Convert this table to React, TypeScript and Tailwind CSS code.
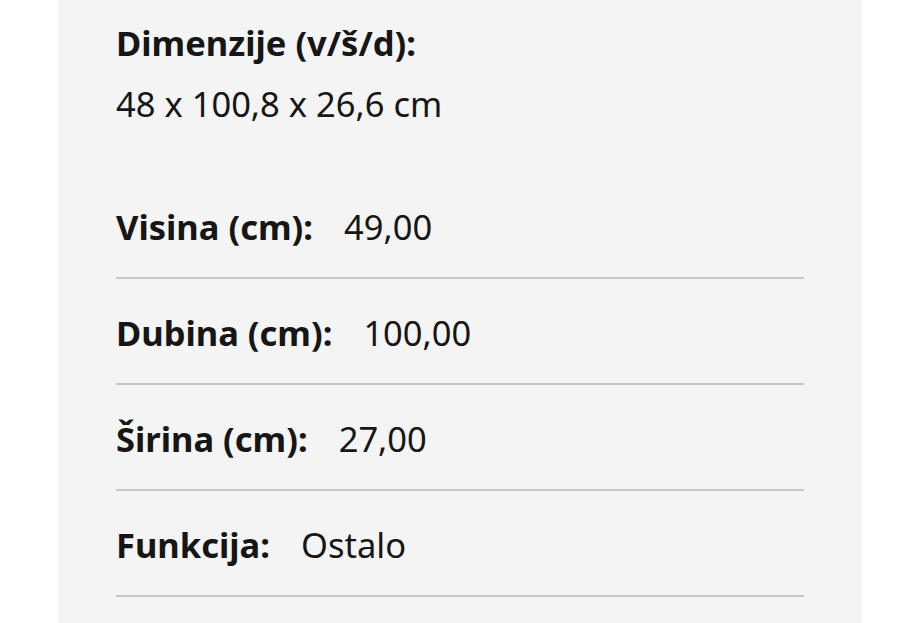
const rows = [
  { label: "Visina (cm):", value: "49,00" },
  { label: "Dubina (cm):", value: "100,00" },
  { label: "Širina (cm):", value: "27,00" },
  { label: "Funkcija:", value: "Ostalo" },
];

export default function App() {
  return (
    <div className="min-h-[623px] bg-white font-['Noto_Sans',sans-serif] text-[#161616]">
      <div className="ml-[58px] w-[804px] min-h-[623px] bg-[#f4f4f4] px-[58px] pt-[12px]">
        <div className="text-[34.5px] leading-[61px]">
          <div className="font-bold">Dimenzije (v/š/d):</div>
          <div>48 x 100,8 x 26,6 cm</div>
        </div>
        <div className="mt-[39px]">
          {rows.map((r) => (
            <div
              key={r.label}
              className="flex border-b-2 border-[#c6c6c6] pt-[33px] pb-[29px] text-[34.5px] leading-[42px]"
            >
              <span className="font-bold">{r.label}</span>
              <span className="ml-[31px]">{r.value}</span>
            </div>
          ))}
        </div>
      </div>
    </div>
  );
}
